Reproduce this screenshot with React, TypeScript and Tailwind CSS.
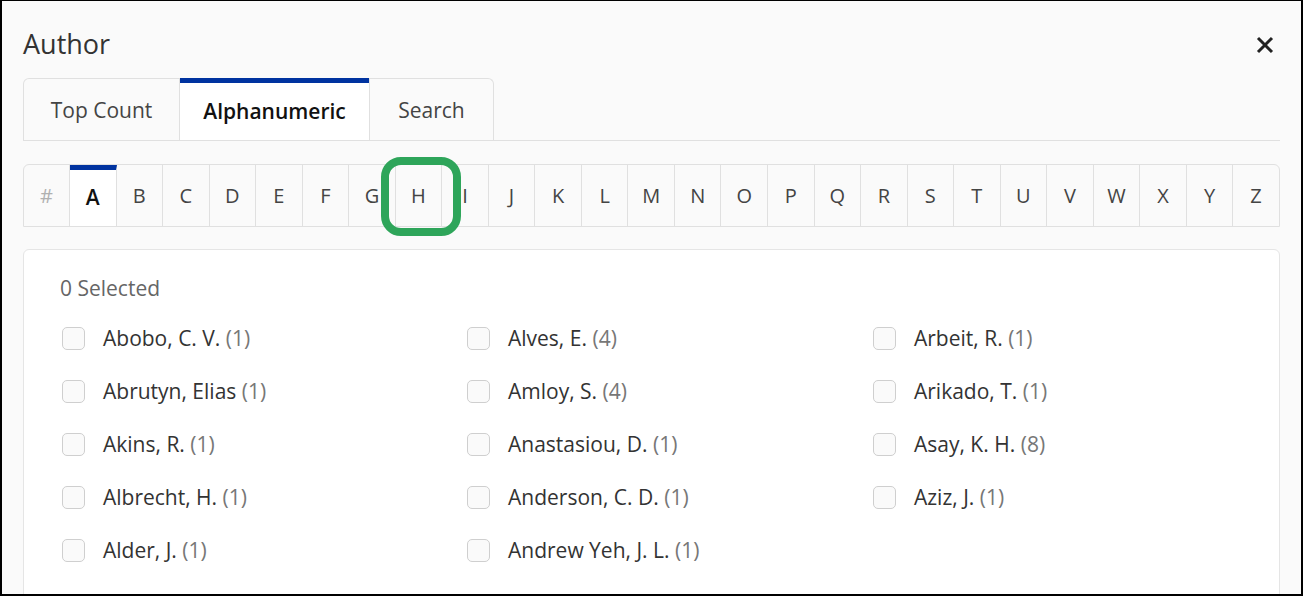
const letters = ["A","B","C","D","E","F","G","H","I","J","K","L","M","N","O","P","Q","R","S","T","U","V","W","X","Y","Z"];

const authors = [
  { name: "Abobo, C. V.", count: 1 },
  { name: "Abrutyn, Elias", count: 1 },
  { name: "Akins, R.", count: 1 },
  { name: "Albrecht, H.", count: 1 },
  { name: "Alder, J.", count: 1 },
  { name: "Alves, E.", count: 4 },
  { name: "Amloy, S.", count: 4 },
  { name: "Anastasiou, D.", count: 1 },
  { name: "Anderson, C. D.", count: 1 },
  { name: "Andrew Yeh, J. L.", count: 1 },
  { name: "Arbeit, R.", count: 1 },
  { name: "Arikado, T.", count: 1 },
  { name: "Asay, K. H.", count: 8 },
  { name: "Aziz, J.", count: 1 },
];

const tabs = ["Top Count", "Alphanumeric", "Search"];

export default function App() {
  return (
    <div
      className="relative w-[1303px] h-[596px] overflow-hidden bg-[#fafafa] border-t border-l-2 border-r-2 border-b-2 border-black text-[#333]"
      style={{ fontFamily: '"Open Sans", "Noto Sans", sans-serif' }}
    >
      <div className="pl-[21px] pr-[21px]">
        {/* header */}
        <div className="flex items-center justify-between h-[77px] pt-[8px]">
          <h1 className="text-[27px] leading-[34px] text-[#333]">Author</h1>
          <button className="mr-[6px] mt-[2px]">
            <svg width="18" height="18" viewBox="0 0 18 18" fill="none">
              <path d="M2 2 L16 16 M16 2 L2 16" stroke="#222" strokeWidth="3" />
            </svg>
          </button>
        </div>

        {/* tabs */}
        <div className="flex border-b border-[#e0e0e0]">
          {tabs.map((t, i) => {
            const active = i === 1;
            return (
              <div
                key={t}
                className={
                  active
                    ? "h-[62px] w-[189px] flex items-center justify-center bg-white border-t-[5px] border-[#0033a0] text-[21px] font-semibold text-[#111] -mb-px"
                    : i === 0
                    ? "h-[62px] w-[157px] flex items-center justify-center pt-[2px] bg-[#fafafa] border border-b-0 border-[#e0e0e0] rounded-tl-[6px] text-[21px] text-[#444]"
                    : "h-[62px] w-[125px] flex items-center justify-center pt-[2px] bg-[#fafafa] border border-b-0 border-[#e0e0e0] rounded-tr-[6px] text-[21px] text-[#444]"
                }
              >
                {t}
              </div>
            );
          })}
        </div>

        {/* alphabet */}
        <div className="mt-[23px] flex h-[63px] border border-[#e0e0e0] rounded-t-[6px] overflow-hidden">
          <div className="w-[46px] flex items-center justify-center text-[20px] text-[#b0b0b0] border-r border-[#e0e0e0]">
            #
          </div>
          {letters.map((l) => {
            const active = l === "A";
            return (
              <div
                key={l}
                className={
                  active
                    ? "flex-1 flex items-center justify-center bg-white border-t-[5px] border-t-[#0033a0] border-r border-r-[#e0e0e0] text-[21px] font-semibold text-[#111]"
                    : "flex-1 flex items-center justify-center border-r border-[#e0e0e0] last:border-r-0 text-[20px] text-[#444]"
                }
              >
                {l}
              </div>
            );
          })}
        </div>

        {/* list panel */}
        <div className="mt-[22px] bg-white border border-[#e5e5e5] rounded-[6px] h-[400px] pl-[36px] pt-[24px]">
          <div className="text-[21px] text-[#666] leading-[28px]">0 Selected</div>
          <div className="grid grid-flow-col grid-rows-5 grid-cols-[405px_406px_1fr] mt-[10px]">
            {authors.map((a) => (
              <label key={a.name} className="flex items-center h-[53px]">
                <span className="ml-[2px] w-[23px] h-[23px] rounded-[5px] border border-[#cfcfcf] bg-[#fafafa]" />
                <span className="ml-[18px] text-[21px] text-[#333]">
                  {a.name} <span className="text-[#777]">({a.count})</span>
                </span>
              </label>
            ))}
          </div>
        </div>
      </div>

      {/* highlight annotation */}
      <div className="absolute left-[379px] top-[156px] w-[80px] h-[79px] border-[8px] border-[#2ea55a] rounded-[20px]" />
    </div>
  );
}
